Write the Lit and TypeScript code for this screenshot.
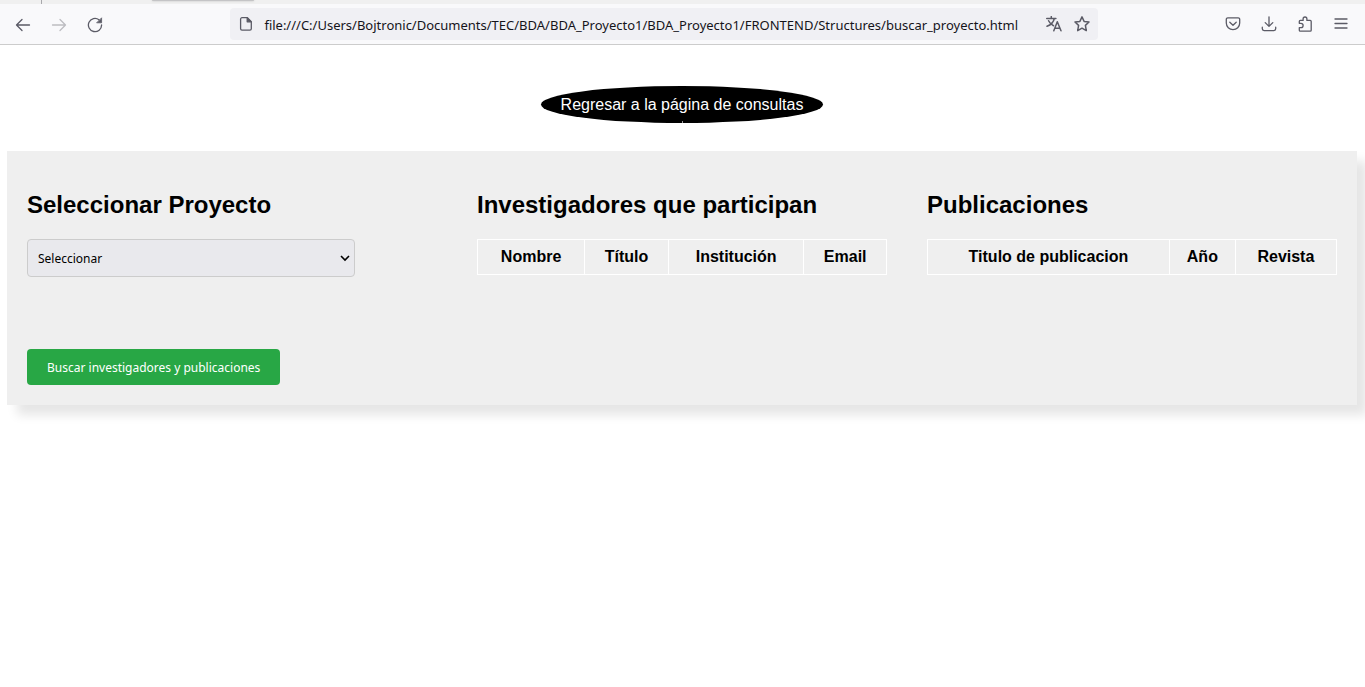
import { LitElement, html, css } from "lit";
import { customElement, state } from "lit/decorators.js";

@customElement("browser-toolbar")
class BrowserToolbar extends LitElement {
  static styles = css`
    :host { display: block; }
    .tabs { height: 4px; background: #f0f0f0; display: flex; overflow: hidden; }
    .divider { width: 1px; margin-left: 41px; background: #a8a8ac; }
    .tab { width: 102px; height: 1px; margin-left: 110px; border-radius: 0 0 4px 4px; background: #c4c4c6; box-shadow: 0 0 2px #aaa; }
    .bar {
      box-sizing: border-box; height: 41px; padding: 0 13px; background: #f9f9fb;
      border-bottom: 1px solid #ccc; display: grid; align-items: center;
      grid-template-columns: 6fr minmax(0, 868px) 7fr;
    }
    .group { display: flex; gap: 16px; align-items: center; }
    .start { padding-top: 2px; }
    .end { justify-content: flex-end; margin-right: 1px; }
    button { width: 20px; height: 20px; padding: 2px; border: 0; background: none; color: #5b5b66; display: block; }
    button:disabled { color: #bdbdc1; }
    svg { display: block; width: 16px; height: 16px; fill: none; stroke: currentColor; stroke-width: 1.3; stroke-linecap: round; stroke-linejoin: round; }
    .url { height: 32px; padding: 0 6px 0 8px; box-sizing: border-box; border-radius: 4px; background: #f0f0f4; color: #5b5b66; display: flex; align-items: center; gap: 8px; }
    .url input { box-sizing: border-box; flex: 1; min-width: 0; height: 26px; padding: 2px 2px 0; border: 0; outline: 0; background: none; color: #15141a; font: 13px/24px "Noto Sans", "Open Sans", sans-serif; }
  `;

  render() {
    return html`
      <div class="tabs"><span class="divider"></span><span class="tab"></span></div>
      <div class="bar">
        <div class="group start">
          <button aria-label="Atrás"><svg viewBox="0 0 16 16"><path d="M14.500 8H1.500M7 2.500 1.500 8 7 13.500"/></svg></button>
          <button aria-label="Adelante" disabled><svg viewBox="0 0 16 16"><path d="M1.500 8h13M9 2.500 14.500 8 9 13.500"/></svg></button>
          <button aria-label="Recargar"><svg viewBox="0 0 16 16"><path d="M14.600 8A6.600 6.600 0 1 1 12 2.800"/><path d="M14.600 1.200v4.600H10z" fill="currentColor" stroke-width=".8"/></svg></button>
        </div>
        <div class="url">
          <svg viewBox="0 0 16 16"><path d="M4 1.700h5.400L13.300 5.600v7.200a1.400 1.400 0 0 1-1.400 1.400H4a1.400 1.400 0 0 1-1.400-1.400V3.100A1.400 1.400 0 0 1 4 1.700z"/><path d="M9.200 2v3.800h3.800z" fill="currentColor"/></svg>
          <input aria-label="Dirección" readonly value="file:///C:/Users/Bojtronic/Documents/TEC/BDA/BDA_Proyecto1/BDA_Proyecto1/FRONTEND/Structures/buscar_proyecto.html">
          <button aria-label="Traducir"><svg viewBox="0 0 16 16"><path d="M.7 2.500h9.200M5.300.6v1.900M8.300 2.500C7.600 6 4.500 9 1 10.300M2.600 4.800c1 2.200 2.800 4 4.900 5M7.800 14.800l3.500-9 3.700 9M9 12.200h4.800" stroke-width="1.500"/></svg></button>
          <button aria-label="Marcador"><svg viewBox="0 0 16 16"><path d="m8 .9 2.100 4.500 4.900.6-3.600 3.400.9 5.200L8 12.200l-4.300 2.400.9-5.200L1 6l4.900-.6z" stroke-width="1.500"/></svg></button>
        </div>
        <div class="group end">
          <button aria-label="Pocket"><svg viewBox="0 0 16 16"><path d="M2.800 1.800h10.400a1.500 1.500 0 0 1 1.500 1.500V7a6.700 6.700 0 0 1-13.400 0V3.300a1.500 1.500 0 0 1 1.500-1.500zM4.800 6.200 8 9.200l3.200-3"/></svg></button>
          <button aria-label="Descargas"><svg viewBox="0 0 16 16"><path d="M8 .8v9.400M4.200 6.600 8 10.400l3.800-3.800M1.300 11.200v1.600a1.800 1.800 0 0 0 1.800 1.800h9.800a1.800 1.800 0 0 0 1.800-1.800v-1.600"/></svg></button>
          <button aria-label="Extensiones"><svg viewBox="0 0 16 16"><path d="M2.300 7.300V5.400c0-.6.4-1 1-1h2.800V2.900a1.900 1.900 0 0 1 3.800 0v1.500h3.300c.6 0 1 .4 1 1v8.800c0 .6-.4 1-1 1H3.300c-.6 0-1-.4-1-1v-2.500h1.600a2.200 2.200 0 0 0 0-4.400z"/></svg></button>
          <button aria-label="Menú"><svg viewBox="0 0 16 16"><path d="M2 3h12M2 7.500h12M2 12h12"/></svg></button>
        </div>
      </div>`;
  }
}

@customElement("app-root")
class AppRoot extends LitElement {
  @state() private researcherColumns = ["Nombre", "Título", "Institución", "Email"];
  @state() private publicationColumns = ["Titulo de publicacion", "Año", "Revista"];

  static styles = css`
    :host { display: block; min-height: 100vh; overflow-x: clip; background: #fff; color: #000; font: 16px/18px "Liberation Sans", Arial, sans-serif; }
    .back { display: flex; justify-content: center; margin: 0 8px 0 7px; padding: 41px 0 28px; }
    .back a { position: relative; padding: 10px 20px 9px; border-radius: 50%; background: #000; color: #fff; text-decoration: none; }
    .back a::after { content: ""; position: absolute; left: 50%; bottom: 0; width: 1px; height: 2px; background: #999; }
    .panel { display: grid; grid-template-columns: repeat(3, minmax(0, 1fr)); margin: 0 8px 0 7px; background: #efefef; box-shadow: 10px 10px 10px rgba(0, 0, 0, 0.1); }
    section { padding: 20px; }
    h2 { margin: 20px 0; font-size: 24px; line-height: 28px; }
    select, .search { display: block; box-sizing: border-box; border-radius: 4px; font: 12px/16px "Noto Sans", sans-serif; }
    .field { position: relative; width: 80%; }
    select { appearance: none; width: 100%; height: 38px; padding: 2px 10px 0; border: 1px solid #ccc; background: #e9e9ed; color: #000; }
    .chevron { position: absolute; right: 5px; top: 14px; width: 10px; height: 10px; fill: none; stroke: #000; stroke-width: 1.6; pointer-events: none; }
    .search { height: 36px; margin-top: 72px; padding: 2px 20px 0; border: 0; background: #28a745; color: #fff; }
    table { width: 100%; border-collapse: collapse; }
    th { padding: 8px; border: 1px solid #fff; text-align: center; }
  `;

  private header(columns: string[]) {
    return html`<table><thead><tr>${columns.map((c) => html`<th scope="col">${c}</th>`)}</tr></thead></table>`;
  }

  render() {
    return html`
      <browser-toolbar></browser-toolbar>
      <main>
        <nav class="back"><a href="#">Regresar a la página de consultas</a></nav>
        <div class="panel">
          <section>
            <h2 id="project">Seleccionar Proyecto</h2>
            <div class="field">
              <select aria-labelledby="project"><option>Seleccionar</option></select>
              <svg class="chevron" viewBox="0 0 10 10"><path d="m1 3 4 4 4-4"/></svg>
            </div>
            <button class="search">Buscar investigadores y publicaciones</button>
          </section>
          <section>
            <h2>Investigadores que participan</h2>
            ${this.header(this.researcherColumns)}
          </section>
          <section>
            <h2>Publicaciones</h2>
            ${this.header(this.publicationColumns)}
          </section>
        </div>
      </main>`;
  }
}
